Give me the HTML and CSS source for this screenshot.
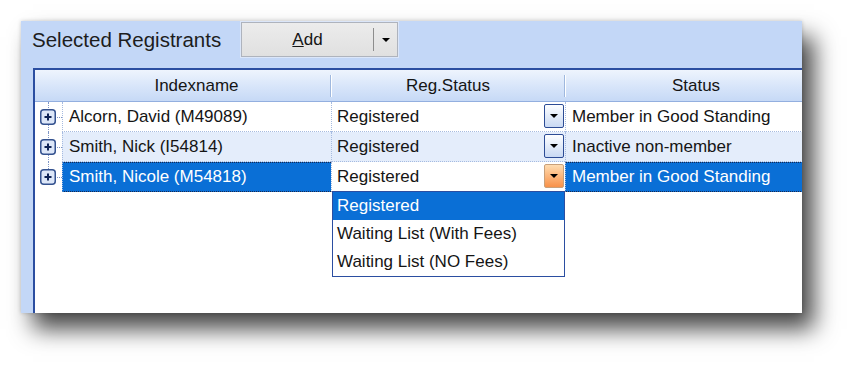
FILE: index.html
```html
<!DOCTYPE html>
<html lang="en">

<head>
  <meta charset="UTF-8">
  <meta name="viewport" content="width=device-width, initial-scale=1.0">
  <title>Selected Registrants</title>
  <link rel="stylesheet" href="styles.css">
</head>

<body>
  <div class="panel">
    <div class="toolbar">
      <span class="title">Selected Registrants</span>
      <div class="split-btn">
        <span class="btn-main"><u>A</u>dd</span>
        <span class="btn-drop"><i class="tri"></i></span>
      </div>
    </div>

    <div class="grid">
      <div class="head">
        <div class="h-cell"></div>
        <div class="h-cell sep">Indexname</div>
        <div class="h-cell sep">Reg.Status</div>
        <div class="h-cell">Status</div>
      </div>

      <div class="row">
        <div class="tree">
          <svg class="expander" width="16" height="16" viewBox="0 0 16 16">
            <rect x="0.75" y="0.75" width="14.5" height="14.5" rx="3" fill="#dde7f8" stroke="#34528f" stroke-width="1.5" />
            <path d="M4.5 8h7M8 4.5v7" stroke="#0f2355" stroke-width="2" />
          </svg>
        </div>
        <div class="cell name">Alcorn, David (M49089)</div>
        <div class="cell reg">Registered<span class="drop"><i class="tri"></i></span></div>
        <div class="cell status">Member in Good Standing</div>
      </div>

      <div class="row alt">
        <div class="tree">
          <svg class="expander" width="16" height="16" viewBox="0 0 16 16">
            <rect x="0.75" y="0.75" width="14.5" height="14.5" rx="3" fill="#dde7f8" stroke="#34528f" stroke-width="1.5" />
            <path d="M4.5 8h7M8 4.5v7" stroke="#0f2355" stroke-width="2" />
          </svg>
        </div>
        <div class="cell name">Smith, Nick (I54814)</div>
        <div class="cell reg">Registered<span class="drop"><i class="tri"></i></span></div>
        <div class="cell status">Inactive non-member</div>
      </div>

      <div class="row selected">
        <div class="tree last">
          <svg class="expander" width="16" height="16" viewBox="0 0 16 16">
            <rect x="0.75" y="0.75" width="14.5" height="14.5" rx="3" fill="#dde7f8" stroke="#34528f" stroke-width="1.5" />
            <path d="M4.5 8h7M8 4.5v7" stroke="#0f2355" stroke-width="2" />
          </svg>
        </div>
        <div class="cell name">Smith, Nicole (M54818)</div>
        <div class="cell reg editing">Registered<span class="drop hot"><i class="tri"></i></span>
          <ul class="list">
            <li class="on">Registered</li>
            <li>Waiting List (With Fees)</li>
            <li>Waiting List (NO Fees)</li>
          </ul>
        </div>
        <div class="cell status">Member in Good Standing</div>
      </div>
    </div>
  </div>
</body>

</html>
```

FILE: styles.css
```css
html,
body {
  height: 100%;
}

body {
  margin: 0;
  padding-top: 21px;
  box-sizing: border-box;
  background: #fff;
  font-family: "Liberation Sans", Arial, sans-serif;
  color: #151515;
}

.panel {
  margin-left: 21px;
  width: 781px;
  height: 292px;
  background-color: #c3d7f7;
  overflow: hidden;
  box-shadow: 0 0 4px rgba(0, 0, 0, 0.2), 12px 16px 22px rgba(0, 0, 0, 0.72);
}

.toolbar {
  display: flex;
  align-items: center;
  height: 37px;
  padding-left: 11px;
}

.title {
  width: 209px;
  font-size: 20.5px;
  color: #1d1d1d;
}

.split-btn {
  display: flex;
  width: 155px;
  height: 33px;
  background: linear-gradient(#ececec, #e0e0e0);
  border: 1px solid #aeb3bd;
  box-shadow: 0 0 0 1px #dbe6f9;
}

.btn-main {
  width: 131px;
  display: flex;
  align-items: center;
  justify-content: center;
  font-size: 17px;
  border-right: 1px solid #8d8d8d;
  margin: 5px 0;
}

.btn-drop {
  flex: 1;
  display: flex;
  align-items: center;
  justify-content: center;
}

.tri {
  display: block;
  width: 0;
  height: 0;
  border-left: 4px solid transparent;
  border-right: 4px solid transparent;
  border-top: 4px solid #000;
}

.grid {
  margin: 10px 0 0 12px;
  width: 792px;
  height: 245px;
  background: #fff;
  border-left: 2px solid #2b4ea1;
  border-top: 2px solid #2b4ea1;
}

.head,
.row {
  display: grid;
  grid-template-columns: 27px 269px 234px 262px;
}

.head {
  height: 31px;
  background: linear-gradient(#eef4fd, #d9e6fa 50%, #c6d9f6);
  border-bottom: 1px solid #93afdf;
  font-size: 17px;
}

.h-cell {
  display: flex;
  align-items: center;
  justify-content: center;
  position: relative;
}

.h-cell.sep::after {
  content: "";
  position: absolute;
  right: 0;
  top: 5px;
  bottom: 4px;
  border-right: 1px solid #9fb8de;
  box-shadow: 1px 0 0 #fff;
}

.row {
  height: 30px;
  font-size: 17px;
}

.row.alt .cell {
  background: #e4edfb;
}

.tree {
  position: relative;
}

.tree::before {
  content: "";
  position: absolute;
  left: 13px;
  top: 0;
  bottom: 0;
  border-left: 1px dotted #7f95c6;
}

.tree.last::before {
  bottom: 15px;
}

.tree::after {
  content: "";
  position: absolute;
  left: 20px;
  right: 0;
  top: 15px;
  border-top: 1px dotted #7f95c6;
}

.expander {
  position: absolute;
  left: 5px;
  top: 7px;
  z-index: 1;
}

.cell {
  display: flex;
  align-items: center;
  padding-left: 6px;
  border-left: 1px dotted #a6bbe0;
  border-bottom: 1px dotted #a6bbe0;
  white-space: nowrap;
  position: relative;
}

.cell.reg {
  padding-left: 5px;
}

.drop {
  position: absolute;
  right: 1px;
  top: 2px;
  width: 18px;
  height: 22px;
  border: 1px solid #2c4c95;
  border-radius: 2px;
  background: linear-gradient(#fdfeff, #c9d9f3);
  display: flex;
  align-items: center;
  justify-content: center;
}

.drop.hot {
  border-color: #c8a07a;
  background: linear-gradient(#ffdcb0, #f89149);
}

.row.selected .name,
.row.selected .status {
  background: #0a6fd6;
  color: #fff;
  border-top: 1px dotted #1a2a50;
  border-bottom: 1px dotted #1a2a50;
}

.row.selected .reg {
  background: #fff;
  border-bottom: 1px dotted #1a2a50;
}

.list {
  position: absolute;
  left: 0;
  top: 29px;
  width: 231px;
  margin: 0;
  padding: 0;
  list-style: none;
  background: #fff;
  border: 1px solid #2b4ea1;
  z-index: 2;
}

.list li {
  height: 28px;
  line-height: 28px;
  padding-left: 4px;
  color: #151515;
}

.list li.on {
  background: #0a6fd6;
  color: #fff;
}
```
